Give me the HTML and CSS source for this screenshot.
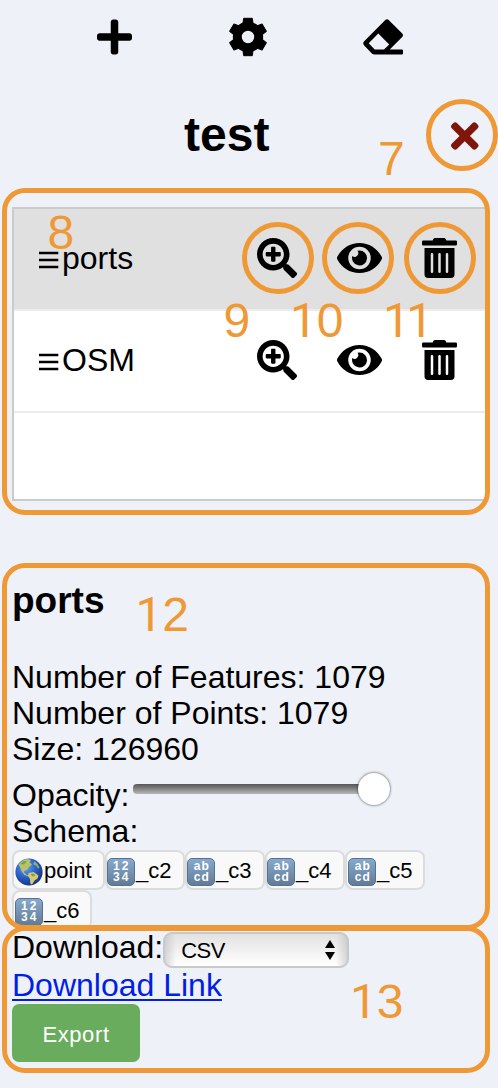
FILE: index.html
```html
<!DOCTYPE html>
<html lang="en">
<head>
<meta charset="utf-8">
<title>test</title>
<link rel="stylesheet" href="styles.css">
</head>
<body>
<svg class="defs" width="0" height="0">
  <symbol id="zoom" viewBox="0 0 512 512"><path d="M304 192v32c0 6.6-5.4 12-12 12h-56v56c0 6.6-5.4 12-12 12h-32c-6.6 0-12-5.4-12-12v-56h-56c-6.6 0-12-5.4-12-12v-32c0-6.6 5.4-12 12-12h56v-56c0-6.6 5.4-12 12-12h32c6.6 0 12 5.4 12 12v56h56c6.6 0 12 5.4 12 12zm201 284.700L476.700 505c-9.400 9.400-24.600 9.400-33.900 0L343 405.300c-4.500-4.500-7-10.600-7-17V372c-35.300 27.600-79.700 44-128 44C93.100 416 0 322.900 0 208S93.100 0 208 0s208 93.100 208 208c0 48.300-16.400 92.700-44 128h16.300c6.400 0 12.500 2.500 17 7l99.700 99.700c9.300 9.400 9.300 24.600 0 34zM344 208c0-75.200-60.800-136-136-136S72 132.800 72 208s60.800 136 136 136 136-60.800 136-136z"/></symbol>
  <symbol id="eye" viewBox="0 0 576 512"><path d="M572.52 241.4C518.29 135.59 410.93 64 288 64S57.68 135.64 3.48 241.41a32.35 32.35 0 0 0 0 29.19C57.71 376.41 165.07 448 288 448s230.32-71.64 284.52-177.41a32.35 32.35 0 0 0 0-29.19zM288 400a144 144 0 1 1 144-144 143.93 143.93 0 0 1-144 144zm0-240a95.31 95.31 0 0 0-25.31 3.79 47.85 47.85 0 0 1-66.9 66.9A95.78 95.78 0 1 0 288 160z"/></symbol>
  <symbol id="trash" viewBox="0 0 448 512"><path d="M32 464a48 48 0 0 0 48 48h288a48 48 0 0 0 48-48V128H32zm272-256a16 16 0 0 1 32 0v224a16 16 0 0 1-32 0zm-96 0a16 16 0 0 1 32 0v224a16 16 0 0 1-32 0zm-96 0a16 16 0 0 1 32 0v224a16 16 0 0 1-32 0zM432 32H312l-9.4-18.7A24 24 0 0 0 281.100 0H166.800a23.720 23.720 0 0 0-21.400 13.300L136 32H16A16 16 0 0 0 0 48v32a16 16 0 0 0 16 16h416a16 16 0 0 0 16-16V48a16 16 0 0 0-16-16z"/></symbol>
  <symbol id="grip" viewBox="0 0 20 18"><path d="M0 2h19.300M0 9h19.300M0 16h19.300" stroke="#000" stroke-width="2.600"/></symbol>
</svg>

<nav class="toolbar">
  <svg class="tool" width="35" height="40" viewBox="0 0 448 512"><path d="M416 208H272V64c0-17.670-14.330-32-32-32h-32c-17.670 0-32 14.330-32 32v144H32c-17.670 0-32 14.330-32 32v32c0 17.670 14.330 32 32 32h144v144c0 17.670 14.330 32 32 32h32c17.670 0 32-14.330 32-32V304h144c17.670 0 32-14.330 32-32v-32c0-17.670-14.330-32-32-32z"/></svg>
  <svg class="tool" width="40" height="40" viewBox="-20 -20 40 40">
    <circle r="10.700" fill="none" stroke="#000" stroke-width="9"/>
    <g stroke="#000" stroke-width="1" stroke-linejoin="round">
      <path id="cog" d="M-4.300 -18.700h8.600l.8 5.700h-10.200z"/>
      <use href="#cog" transform="rotate(60)"/><use href="#cog" transform="rotate(120)"/><use href="#cog" transform="rotate(180)"/><use href="#cog" transform="rotate(240)"/><use href="#cog" transform="rotate(300)"/>
    </g>
  </svg>
  <svg class="tool" width="40" height="40" viewBox="363 17 40 40"><path fill-rule="evenodd" d="M385.300 20q1.700-1.700 3.400 0l13.300 13.200q2 2 0 4L389.700 49.600H401.800q1.200 0 1.200 1.200v2.500q0 1.200-1.200 1.200H374.500q-1.500 0-2.600-1.100L364.200 45.500q-2-2.200 0-4.300zM378.300 33.600l-9.600 9.700 6 6.300h9.300l5.200-5.100z"/></svg>
</nav>

<header class="title-row">
  <h2>test</h2>
  <svg class="close" width="27.5" height="40" viewBox="0 0 352 512"><path d="M242.72 256l100.070-100.070c12.280-12.280 12.280-32.190 0-44.480l-22.240-22.240c-12.280-12.280-32.190-12.280-44.480 0L176 189.280 75.930 89.210c-12.280-12.280-32.190-12.280-44.480 0L9.210 111.450c-12.280 12.280-12.280 32.190 0 44.480L109.280 256 9.210 356.070c-12.280 12.280-12.280 32.190 0 44.480l22.240 22.240c12.280 12.280 32.200 12.280 44.480 0L176 322.720l100.070 100.070c12.280 12.280 32.200 12.280 44.480 0l22.240-22.240c12.280-12.280 12.280-32.190 0-44.480L242.720 256z"/></svg>
</header>

<ul class="layers">
  <li class="layer selected">
    <svg class="grip" width="20" height="18"><use href="#grip"/></svg><span class="name">ports</span>
    <svg width="40" height="40"><use href="#zoom"/></svg>
    <svg width="45" height="40"><use href="#eye"/></svg>
    <svg width="35" height="40"><use href="#trash"/></svg>
  </li>
  <li class="layer">
    <svg class="grip" width="20" height="18"><use href="#grip"/></svg><span class="name">OSM</span>
    <svg width="40" height="40"><use href="#zoom"/></svg>
    <svg width="45" height="40"><use href="#eye"/></svg>
    <svg width="35" height="40"><use href="#trash"/></svg>
  </li>
</ul>

<section class="details">
  <h3>ports</h3>
  <div>Number of Features: 1079</div>
  <div>Number of Points: 1079</div>
  <div>Size: 126960</div>
  <div class="opacity"><span>Opacity:</span><div class="track"><div class="thumb"></div></div></div>
  <div>Schema:</div>
  <div class="chips">
    <div class="chip wide">
      <svg width="28" height="28" viewBox="0 0 28 28">
        <defs><radialGradient id="sea" cx=".38" cy=".32" r=".72"><stop offset="0" stop-color="#6aa6f2"/><stop offset=".5" stop-color="#2a62cc"/><stop offset="1" stop-color="#14307c"/></radialGradient></defs>
        <circle cx="14" cy="14" r="13.600" fill="url(#sea)"/>
        <path d="M3.500 6.500Q7 2 12 1l4 1-1.500 2.500 2.500 2-3 2.500-2 3-2.500.5-.5 2 3 2.500 2 .5-.5 1-4-1.500-3-4-1.500-4z" fill="#b9c267"/>
        <path d="M13.500 15l5-1 5 3.500-1 3-3 2-2.500 4-1.500-.5-.5-5-2-3z" fill="#d6cb72"/>
        <path d="M19 3l3.500 3 2 4-1.500.5-2-3-2.500-1z" fill="#91b26b"/>
        <path d="M5 6l4-3 3 .5-3 3zM15.500 16l3-.5 2 2-3 1z" fill="#72a552"/>
      </svg><span>point</span>
    </div>
    <div class="chip"><i class="kind num"><b>12</b><b>34</b></i><span>_c2</span></div>
    <div class="chip"><i class="kind"><b>ab</b><b>cd</b></i><span>_c3</span></div>
    <div class="chip"><i class="kind"><b>ab</b><b>cd</b></i><span>_c4</span></div>
    <div class="chip last"><i class="kind"><b>ab</b><b>cd</b></i><span>_c5</span></div>
    <div class="chip last"><i class="kind num"><b>12</b><b>34</b></i><span>_c6</span></div>
  </div>
</section>

<section class="download">
  <div class="format"><span>Download:</span>
    <div class="select"><span>CSV</span><svg width="10" height="20" viewBox="0 0 10 20"><path d="M0 8L5 0l5 8zM0 12h10l-5 8z"/></svg></div>
  </div>
  <div class="link"><a href="#">Download Link</a></div>
  <button class="export">Export</button>
</section>

<div class="ring r7"></div><div class="ring r9"></div><div class="ring r10"></div><div class="ring r11"></div>
<div class="frame f8"></div><div class="frame f12"></div><div class="frame f13"></div>
<div class="mark m7">7</div>
<div class="mark m8">8</div>
<div class="mark m9">9</div>
<div class="mark m10"><span class="one">1</span>0</div>
<div class="mark m11"><span class="one">1</span><span class="one">1</span></div>
<div class="mark m12"><span class="one">1</span>2</div>
<div class="mark m13"><span class="one">1</span>3</div>
</body>
</html>
```
FILE: styles.css
```css
* { box-sizing: border-box; }
body {
  margin: 0;
  position: relative;
  width: 498px;
  height: 1088px;
  overflow: hidden;
  background: #eef1f7;
  color: #000;
  font: 32px/36px "Liberation Sans", Arial, sans-serif;
}
svg { display: block; flex: none; }
.defs { position: absolute; }

.toolbar {
  display: flex;
  justify-content: space-between;
  height: 106px;
  padding: 17px 95px 0 97px;
}

.title-row { display: flex; height: 101px; padding-left: 184px; }
h2 { margin: 0; width: 267px; font-size: 48px; line-height: 58px; }
.close { margin-top: 10px; fill: #7f160c; }

.layers {
  list-style: none;
  margin: 0 0 0 12px;
  padding: 0;
  width: 476px;
  height: 294px;
  background: #fff;
  border: 2px solid #cacbcd;
}
.layer {
  display: flex;
  align-items: center;
  height: 102px;
  padding: 0 0 2px 24.500px;
  border-bottom: 2px solid #ececec;
}
.layer.selected { background: #e0e0e0; }
.layer .grip { margin-top: 3px; }
.layer .name { width: 198.500px; padding-left: 3.500px; }
.layer svg + svg { margin-left: 40px; }

.details { margin: 78px 0 0 12px; width: 474px; }
h3 { margin: 0 0 36px; font-size: 37px; line-height: 44px; }
.opacity { display: flex; margin: 10px 0 0; }
.track {
  width: 257px;
  height: 10px;
  margin: 7px 0 0 4px;
  border-radius: 4px;
  background: linear-gradient(#565656, #777 35%, #b8b8b8);
  display: flex;
  justify-content: flex-end;
  align-items: center;
}
.thumb {
  width: 32px;
  height: 32px;
  flex: none;
  border-radius: 50%;
  background: #fff;
  box-shadow: 0 0 2px 1px rgba(0,0,0,.35);
}
.chips { display: flex; flex-wrap: wrap; margin-top: 1px; }
.chip {
  display: flex;
  width: 80px;
  height: 40px;
  padding: 0 1px 0 0;
  border: 2px solid #dcdcdc;
  border-radius: 8px;
  background: #f9f9f9;
  font-size: 22px;
  line-height: 37px;
}
.chip.wide { width: 93px; padding-left: 1px; }
.chip.last { padding-left: 1px; }
.chip svg, .kind { margin-top: 6px; }
.chip > span { margin-left: 1px; }
.kind {
  display: flex;
  flex-direction: column;
  align-items: center;
  width: 28px;
  height: 28px;
  flex: none;
  padding-top: 2px;
  border-radius: 5px;
  border: 1px solid #557290;
  background: linear-gradient(#86a9cd, #7593b2 50%, #5f7b98);
  color: #fff;
  font: bold 12px/11px "Liberation Sans", Arial, sans-serif;
  letter-spacing: 1px;
}
.kind.num { letter-spacing: 2px; }
.kind b { margin-right: -1.500px; }

.download { margin: -1px 0 0 12px; }
.format { display: flex; height: 38px; }
.select {
  display: flex;
  justify-content: space-between;
  width: 186px;
  height: 36px;
  margin: 3px 0 0;
  padding: 6px 12px 0 16px;
  border: 2px solid #c9c9c9;
  border-radius: 9px;
  background: linear-gradient(90deg, rgba(190,190,190,.6), transparent 6%, transparent 94%, rgba(190,190,190,.6)), linear-gradient(#e2e2e2, #fff);
  font-size: 22px;
  line-height: 22px;
  letter-spacing: -.5px;
}
.link { height: 37px; }
.link a {
  color: #001ee6;
  text-decoration-thickness: 2px;
  text-underline-offset: 3px;
}
.export {
  display: block;
  width: 128px;
  height: 58px;
  padding: 3px 0 0;
  border: 0;
  border-radius: 7px;
  background: #69ac5d;
  color: #fff;
  font: 22px "Liberation Sans", Arial, sans-serif;
  letter-spacing: .6px;
}

/* Callouts drawn over the panel */
.ring, .frame, .mark { position: absolute; }
.ring { width: 72px; height: 72px; border: 5px solid #ef9936; border-radius: 50%; }
.r7 { left: 425.500px; top: 99px; }
.r9 { left: 241.500px; top: 222px; }
.r10 { left: 321.500px; top: 222px; }
.r11 { left: 403.500px; top: 222px; }
.frame { left: 2px; width: 488px; border: 5px solid #ef9936; border-radius: 23px; }
.f8 { top: 188px; height: 327px; }
.f12 { top: 563px; height: 367px; }
.f13 { top: 926px; height: 147px; }
.mark { color: #ef9936; font-size: 48px; line-height: 48px; white-space: nowrap; }
.one { display: inline-block; width: 26.700px; font-family: Roboto, sans-serif; line-height: 40px; }
.m7 { left: 378px; top: 135px; }
.m8 { left: 47.500px; top: 209px; }
.m9 { left: 223.500px; top: 297px; }
.m10 { left: 290px; top: 297px; }
.m11 { left: 383px; top: 297px; }
.m11 .one + .one { margin-left: -3.500px; }
.m12 { left: 135.500px; top: 591px; }
.m13 { left: 350px; top: 978px; }
```
